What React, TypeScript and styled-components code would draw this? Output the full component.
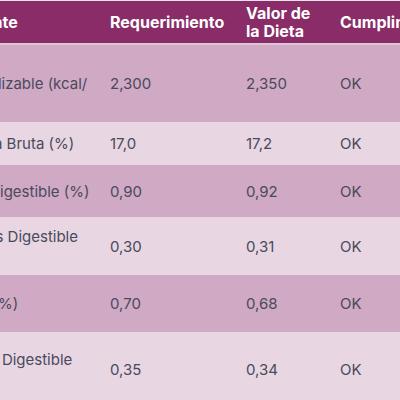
import styled, { createGlobalStyle } from 'styled-components'

const GlobalStyle = createGlobalStyle`
    html, body {
        margin: 0;
        padding: 0;
        background: #ebe4e8;
        overflow: hidden;
    }
`

const header = 'rgb(137, 44, 103)'
const dark = 'rgb(208, 169, 196)'
const light = 'rgb(232, 214, 227)'

const Frame = styled.div`
    width: 400px;
    height: 400px;
    overflow: hidden;
    padding-top: 1px;
    box-sizing: border-box;
    font-family: Inter, 'Liberation Sans', sans-serif;
`

const Table = styled.table`
    margin-left: -66px;
    width: 566px;
    border-collapse: collapse;
    table-layout: fixed;
`

const HeadCell = styled.th`
    background: ${header};
    color: #ffffff;
    font-size: 16px;
    font-weight: 700;
    line-height: 18px;
    text-align: left;
    padding: 0 10px;
    height: 43px;
    border-bottom: 2px solid rgb(222, 196, 213);
    box-sizing: border-box;
`

const Row = styled.tr<{ $shade: 'dark' | 'light'; $h: number }>`
    background: ${(p) => (p.$shade === 'dark' ? dark : light)};
    height: ${(p) => p.$h}px;
`

const Cell = styled.td`
    color: #4a4a5c;
    font-size: 15px;
    line-height: 19px;
    padding: 0 10px;
    vertical-align: middle;
`

const LabelCell = styled(Cell)`
    padding-right: 0;
`

type Item = {
    label: string
    req: string
    diet: string
    h: number
}

const rows: Item[] = [
    { label: 'Energía Metabolizable (kcal/ kg)', req: '2,300', diet: '2,350', h: 78 },
    { label: 'Proteína Bruta (%)', req: '17,0', diet: '17,2', h: 43 },
    { label: 'Lisina Digestible (%)', req: '0,90', diet: '0,92', h: 52 },
    { label: 'Met+Cis Digestible (%)', req: '0,30', diet: '0,31', h: 58 },
    { label: 'Calcio (%)', req: '0,70', diet: '0,68', h: 57 },
    { label: 'Fósforo Digestible (%)', req: '0,35', diet: '0,34', h: 74 },
]

export default function App() {
    return (
        <>
            <GlobalStyle />
            <Frame>
                <Table>
                    <colgroup>
                        <col style={{ width: 166 }} />
                        <col style={{ width: 136 }} />
                        <col style={{ width: 94 }} />
                        <col style={{ width: 170 }} />
                    </colgroup>
                    <thead>
                        <tr>
                            <HeadCell>Nutriente</HeadCell>
                            <HeadCell>Requerimiento</HeadCell>
                            <HeadCell>Valor de la Dieta</HeadCell>
                            <HeadCell>Cumplimiento</HeadCell>
                        </tr>
                    </thead>
                    <tbody>
                        {rows.map((r, i) => (
                            <Row key={r.label} $shade={i % 2 === 0 ? 'dark' : 'light'} $h={r.h}>
                                <LabelCell>{r.label}</LabelCell>
                                <Cell>{r.req}</Cell>
                                <Cell>{r.diet}</Cell>
                                <Cell>OK</Cell>
                            </Row>
                        ))}
                    </tbody>
                </Table>
            </Frame>
        </>
    )
}
